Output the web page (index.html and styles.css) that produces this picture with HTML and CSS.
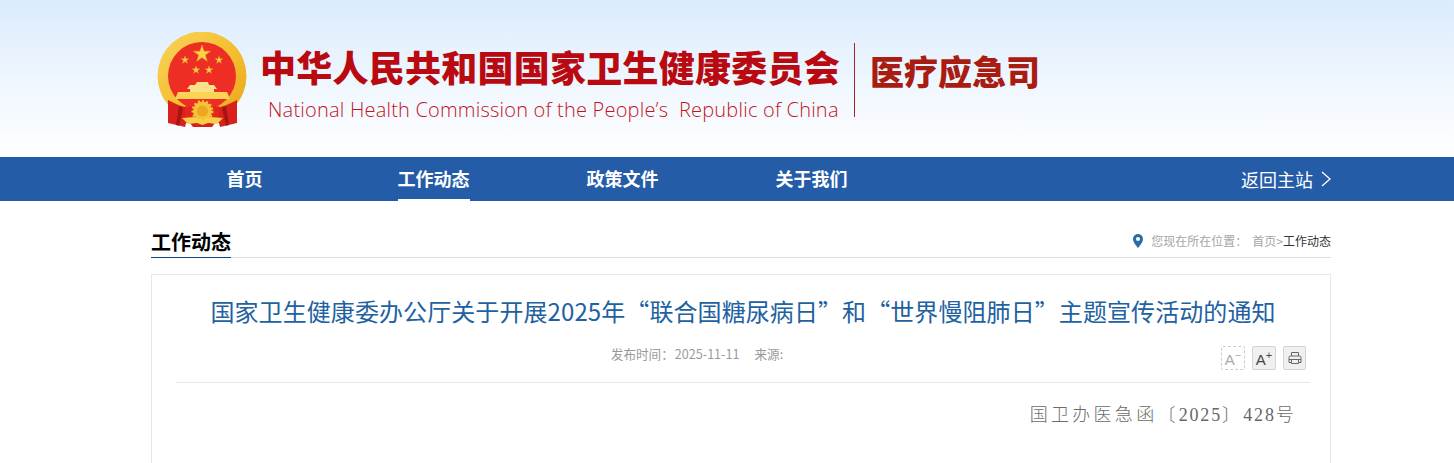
FILE: index.html
```html
<!DOCTYPE html>
<html lang="zh">
<head>
<meta charset="UTF-8">
<meta name="viewport" content="width=device-width,initial-scale=1">
<title>医疗应急司</title>
<link rel="stylesheet" href="styles.css">
</head>
<body>
<header class="top">
  <div class="wrap brand">
    <svg class="emblem" width="94" height="98" viewBox="0 0 94 98">
      <defs>
        <linearGradient id="gold" x1="0" y1="0" x2="1" y2="1">
          <stop offset="0" stop-color="#f9d45c"/><stop offset=".55" stop-color="#f4bd2e"/><stop offset="1" stop-color="#eaa51e"/>
        </linearGradient>
        <polygon id="star" points="0,-10 2.245,-3.09 9.51,-3.09 3.633,1.18 5.878,8.09 0,3.82 -5.878,8.09 -3.633,1.18 -9.51,-3.09 -2.245,-3.09"/>
      </defs>
      <circle cx="47" cy="44" r="44.500" fill="url(#gold)"/>
      <circle cx="47" cy="44" r="34" fill="#ee2e24"/>
      <g fill="#fbd04a" stroke="#e8a71f" stroke-width=".6">
        <use href="#star" transform="translate(47 22) scale(.9)"/>
        <use href="#star" transform="translate(30 28) scale(.42)"/>
        <use href="#star" transform="translate(64 28) scale(.42)"/>
        <use href="#star" transform="translate(41 38) scale(.42)"/>
        <use href="#star" transform="translate(54 38) scale(.42)"/>
      </g>
      <path d="M42 50h11l1 3h5l3 4h-3v3H35v-3h-3l3-4h5z" fill="#fbe08a"/>
      <path d="M23 60h49l3 7H20z" fill="#fad254"/>
      <path d="M13 68c7 4 15 7 22 8l-5 19-17-4z" fill="#d8211c"/>
      <path d="M82 68c-7 4-15 7-22 8l5 19 17-4z" fill="#d8211c"/>
      <path d="M24 74l-3 19 3 .7 4-18zM71 74l3 19-3 .7-4-18z" fill="#a81412"/>
      <path d="M30 74l17 3 17-3v17H30z" fill="#e0261f"/>
      <path d="M35 91h25l-3 4H38z" fill="#d8211c"/>
      <circle cx="47.500" cy="79" r="9.500" fill="#f5c238" stroke="#f5c238" stroke-width="3" stroke-dasharray="2 2"/>
      <circle cx="47.500" cy="79" r="5.500" fill="#eaa71f"/>
      <path d="M27 86l13-1 7.500 3 7.500-3 13 1-6 6-9-1-5.500 2-5.500-2-9 1z" fill="#f8cf4a"/>
    </svg>
    <div class="names">
      <div class="name-cn">中华人民共和国国家卫生健康委员会</div>
      <div class="name-en">National Health Commission of the People’s&nbsp; Republic of China</div>
    </div>
    <div class="dept">医疗应急司</div>
  </div>
</header>

<nav class="nav">
  <div class="wrap nav-in">
    <a class="nav-item"><span>首页</span></a>
    <a class="nav-item on"><span>工作动态</span></a>
    <a class="nav-item"><span>政策文件</span></a>
    <a class="nav-item"><span>关于我们</span></a>
    <a class="back">返回主站
      <svg width="10" height="16" viewBox="0 0 10 16"><path d="M1 1l8 7-8 7" fill="none" stroke="#fff" stroke-width="1.300"/></svg>
    </a>
  </div>
</nav>

<main class="wrap">
  <div class="sec-head">
    <h2>工作动态</h2>
    <div class="crumb">
      <svg width="10" height="14" viewBox="0 0 10 14"><path fill-rule="evenodd" d="M5 0a5 5 0 0 1 5 5c0 3.500-5 9-5 9S0 8.500 0 5a5 5 0 0 1 5-5zm0 3a2 2 0 1 0 0 4 2 2 0 0 0 0-4z" fill="#2a6ca8"/></svg>
      <span class="crumb-lbl">您现在所在位置：</span><span>首页</span><span>&gt;</span><span class="crumb-now">工作动态</span>
    </div>
  </div>

  <article class="card">
    <h1>国家卫生健康委办公厅关于开展2025年“联合国糖尿病日”和“世界慢阻肺日”主题宣传活动的通知</h1>
    <div class="meta">
      <div class="meta-text"><span>发布时间：<span class="meta-date">2025-11-11</span></span><span>来源:</span></div>
      <div class="tools">
        <a class="tool off">A<sup>−</sup></a>
        <a class="tool">A<sup>+</sup></a>
        <a class="tool print">
          <svg width="14" height="14" viewBox="0 0 14 14" fill="none" stroke="#666" stroke-width="1"><path d="M3.500 5V1.500h7V5M3.500 11.500H1V6.500Q1 5 2.500 5h9Q13 5 13 6.500v5h-2.500M1 8.500h12M3.500 8.500h7v4h-7z"/></svg>
        </a>
      </div>
    </div>
    <p class="doc-no">国卫办医急函〔<span class="num">2025</span>〕<span class="num">428</span>号</p>
  </article>
</main>
</body>
</html>
```

FILE: styles.css
```css
*{box-sizing:border-box}
body{margin:0;background:#fff;font-family:"Noto Sans CJK SC","Liberation Sans",sans-serif;color:#333}
a{color:inherit;text-decoration:none}
.wrap{width:1180px;margin-left:151px}

.top{height:157px;background:linear-gradient(#dbecfe,#eef6fe 50%,#fff)}
.brand{display:flex;align-items:flex-start}
.emblem{margin:32px 0 0 4px;flex:none}
.names{margin:0 0 0 11px;width:580px}
.name-cn{margin-top:44px;font-size:36px;line-height:44px;font-weight:900;letter-spacing:.25px;color:#b80a10;white-space:nowrap}
.name-en{margin:7px 0 0 8px;font-family:"Open Sans","Noto Sans",sans-serif;font-size:20px;line-height:30px;font-weight:300;color:#c2141e;white-space:nowrap;letter-spacing:.2px}
.dept{margin:43px 0 0 14px;padding-left:15px;height:74px;border-left:1px solid #a8241c;font-size:34px;line-height:56px;font-weight:900;color:#a81c12;white-space:nowrap}

.nav{height:44px;background:#245ca8;color:#fff}
.nav-in{display:flex;height:44px}
.nav-item{width:189px;text-align:center;font-size:18px;font-weight:700;line-height:42px;flex:none}
.nav-item:first-child{margin-left:-1px}
.nav-item span{display:inline-block;height:44px}
.nav-item.on span{border-bottom:2px solid #fff}
.back{margin-left:auto;display:flex;align-items:center;gap:8px;font-size:18px;line-height:42px}

.sec-head{height:57px;display:flex;justify-content:space-between;align-items:flex-end;border-bottom:1px solid #ddd}
.sec-head h2{margin:0 0 -1px;padding-bottom:1px;font-size:20px;line-height:28px;font-weight:700;color:#000;border-bottom:1px solid #14477f}
.crumb{display:flex;align-items:center;font-size:12px;line-height:18px;color:#a5a5a5;margin-bottom:7px}
.crumb svg{margin-right:8px}
.crumb-lbl{margin-right:5px}
.crumb-now{color:#333}

.card{margin-top:16px;height:189px;border:1px solid #e8e8e8;border-bottom:0;padding:0 20px 0 24px}
.card h1{margin:0;padding-top:16px;font-size:24px;line-height:40px;font-weight:400;letter-spacing:.085px;color:#21619f;text-align:center;white-space:nowrap}
.meta{height:38px;margin-top:14px;padding-right:92px;display:flex;position:relative;border-bottom:1px solid #e8e8e8;justify-content:center}
.meta-text{font-size:12.600px;line-height:18px;color:#999;display:flex;gap:15px}
.meta-date{margin-left:1px}
.tools{position:absolute;right:4px;top:1px;display:flex;gap:7px}
.tool{width:24px;height:24px;border:1px solid #d4d4d4;border-radius:2px;background:#f0f0f0;font-size:15px;line-height:26px;text-align:center;color:#444;font-family:"Liberation Sans",sans-serif}
.tool sup{font-size:11px;line-height:0}
.tool.off{background:#fff;border:1px dashed #ccc;color:#aaa}
.tool.print{width:23px;display:flex;align-items:center;justify-content:center}
.doc-no{margin:16px 13px 0 0;text-align:right;font-family:"Noto Sans CJK SC",serif;font-size:18px;font-weight:300;line-height:28px;letter-spacing:3.300px;color:#6b6b6b;white-space:nowrap}
.doc-no .num{font-family:"Liberation Serif",serif;font-weight:400;letter-spacing:1.800px;color:#666}
```
